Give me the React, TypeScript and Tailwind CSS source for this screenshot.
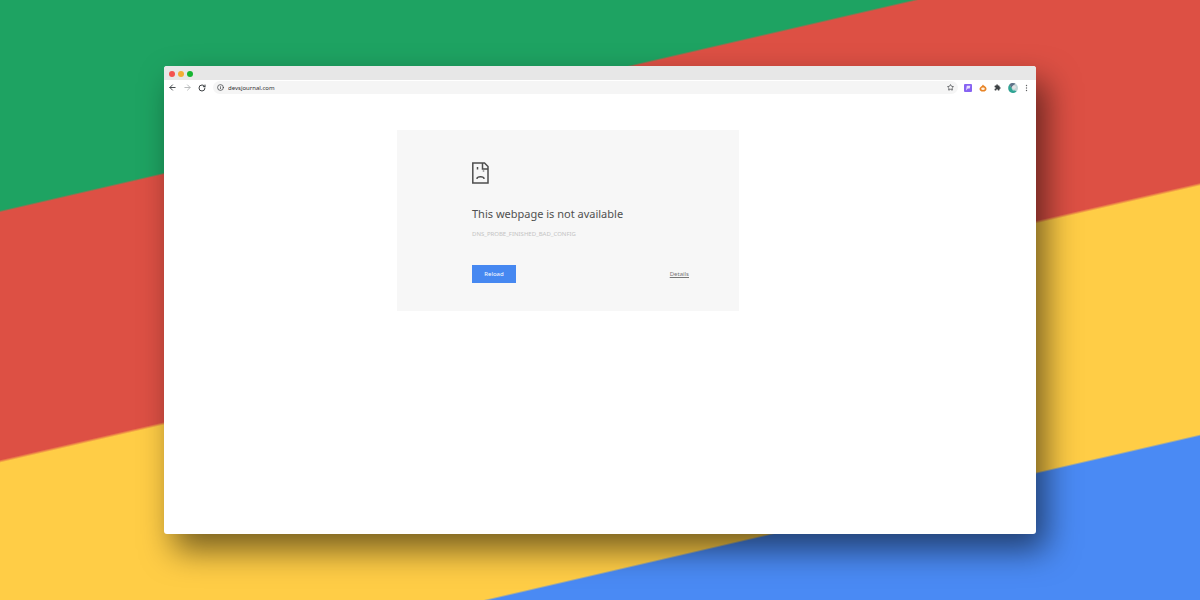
import { ArrowLeft, ArrowRight, Info, RotateCw, Star } from "lucide-react";

const SadPage = () => {
  return (
    <svg
      viewBox="0 0 17 22"
      className="w-[17px] h-[22px]"
      fill="none"
      stroke="#4d4d4d"
      strokeWidth="1.5"
      aria-hidden="true"
    >
      <path d="M.8 1h11.700L16 4.500V21H.8z" />
      <path d="M10.500 1v6H16" />
      <path d="M5.500 5v2.500M11.500 8.500v1" />
      <path d="M4.800 16.800c.5-2.600 6.900-2.600 7.400 0" />
    </svg>
  );
};

const TitleBar = () => {
  return (
    <div className="flex items-center gap-[3px] h-3.5 px-[5px] pt-px bg-[#e7e7e7]">
      <span className="size-1.5 rounded-full bg-[#f4524f]" />
      <span className="size-1.5 rounded-full bg-[#f3ad35]" />
      <span className="size-1.5 rounded-full bg-[#16b531]" />
    </div>
  );
};

const Toolbar = () => {
  return (
    <div className="flex items-center h-[15px] pl-1 pr-2 text-[#3c4043]">
      <div className="flex items-center gap-1.5">
        <button aria-label="Back">
          <ArrowLeft size={9} strokeWidth={2.5} />
        </button>
        <button aria-label="Forward" className="text-[#b4b6b8]">
          <ArrowRight size={9} strokeWidth={2.5} />
        </button>
        <button aria-label="Reload page">
          <RotateCw size={8} strokeWidth={3} />
        </button>
      </div>
      <div className="flex flex-1 items-center gap-1 h-[13px] ml-[7px] px-1 rounded-full bg-[#f5f5f5]">
        <Info size={7} strokeWidth={2.5} />
        <input
          type="text"
          aria-label="Address"
          defaultValue="devsjournal.com"
          className="flex-1 min-w-0 h-3 text-[6px] leading-3 text-[#303134] outline-none"
        />
        <button aria-label="Bookmark this page">
          <Star size={7} strokeWidth={2.5} />
        </button>
      </div>
      <div className="flex items-center gap-[7px] ml-1.5">
        <button aria-label="Purple extension">
          <svg viewBox="0 0 8 8" className="size-2">
            <rect width="8" height="8" rx="1" fill="#8763f2" />
            <path d="M2 6.500L2.800 1.800h3.500L5.700 4.500H3.800L2 6.500z" fill="#e9e1ff" />
          </svg>
        </button>
        <button aria-label="Orange extension">
          <svg viewBox="0 0 8 8" className="size-2">
            <path
              d="M4 .5C4.500 1.800 7.500 2.500 7.500 4.800A3.500 2.800 0 0 1 .5 4.800C.5 3 3 2.500 4 .5z"
              fill="#e88427"
            />
            <ellipse cx="4" cy="4.800" rx="1.800" ry="1.300" fill="#fff3e3" />
          </svg>
        </button>
        <button aria-label="Extensions">
          <svg viewBox="0 0 24 24" className="size-[7px]" fill="#3c4043">
            <path d="M20.500 11H19V7a2 2 0 0 0-2-2h-4V3.500a2.500 2.500 0 0 0-5 0V5H4a2 2 0 0 0-2 2v3.800h1.500a2.700 2.700 0 0 1 0 5.400H2V20a2 2 0 0 0 2 2h3.800v-1.500a2.700 2.700 0 0 1 5.400 0V22H17a2 2 0 0 0 2-2v-4h1.500a2.500 2.500 0 0 0 0-5z" />
          </svg>
        </button>
        <button aria-label="Profile">
          <svg viewBox="0 0 10 10" className="size-2.5">
            <circle cx="5" cy="5" r="5" fill="#c3d6d8" />
            <path d="M1.500 1.500C-.5 4 0 8 3 9.600c2 .8 4 .4 5.500-1L7 7.500H4.800L3.500 5z" fill="#2fa594" />
            <path d="M1.500 1.500C3-.2 6-.2 7.500.8L4.500 3 3.500 5z" fill="#5f7288" />
            <circle cx="6" cy="4.200" r="1.800" fill="#e6e1e4" />
          </svg>
        </button>
        <button aria-label="Menu">
          <svg viewBox="0 0 3 8" className="w-[3px] h-2" fill="#5f6164">
            <circle cx="1.500" cy="1.500" r=".7" />
            <circle cx="1.500" cy="4" r=".7" />
            <circle cx="1.500" cy="6.500" r=".7" />
          </svg>
        </button>
      </div>
    </div>
  );
};

const ErrorCard = () => {
  return (
    <div className="w-full max-w-[342px] pl-[75px] pr-[50px] pt-8 pb-7 bg-[#f7f7f7]">
      <SadPage />
      <h1 className="mt-[22px] text-[11px] leading-4 text-[#505050]">
        This webpage is not available
      </h1>
      <p className="mt-1.5 text-[6px] leading-3 text-[#c4c4c4]">
        DNS_PROBE_FINISHED_BAD_CONFIG
      </p>
      <div className="flex items-center justify-between mt-[25px]">
        <button className="w-11 h-[18px] bg-[#4688f1] text-[6px] leading-3 text-white">
          Reload
        </button>
        <a href="#details" className="text-[6px] leading-3 text-[#777777] underline">
          Details
        </a>
      </div>
    </div>
  );
};

const App = () => {
  return (
    <div className="min-h-screen flex items-center justify-center font-['Noto_Sans','Open_Sans',sans-serif] bg-[linear-gradient(167deg,#1ea362_205px,#dd5044_207px,#dd5044_448px,#ffcd46_451px,#ffcd46_693px,#4a8af4_695px)]">
      <div className="w-full max-w-[872px] min-h-[468px] flex flex-col rounded-[3px] overflow-hidden bg-white shadow-[10px_16px_32px_rgba(0,0,0,0.54)]">
        <TitleBar />
        <Toolbar />
        <main className="flex-1 flex justify-center pt-[35px] pr-16 items-start">
          <ErrorCard />
        </main>
      </div>
    </div>
  );
};

export default App;
